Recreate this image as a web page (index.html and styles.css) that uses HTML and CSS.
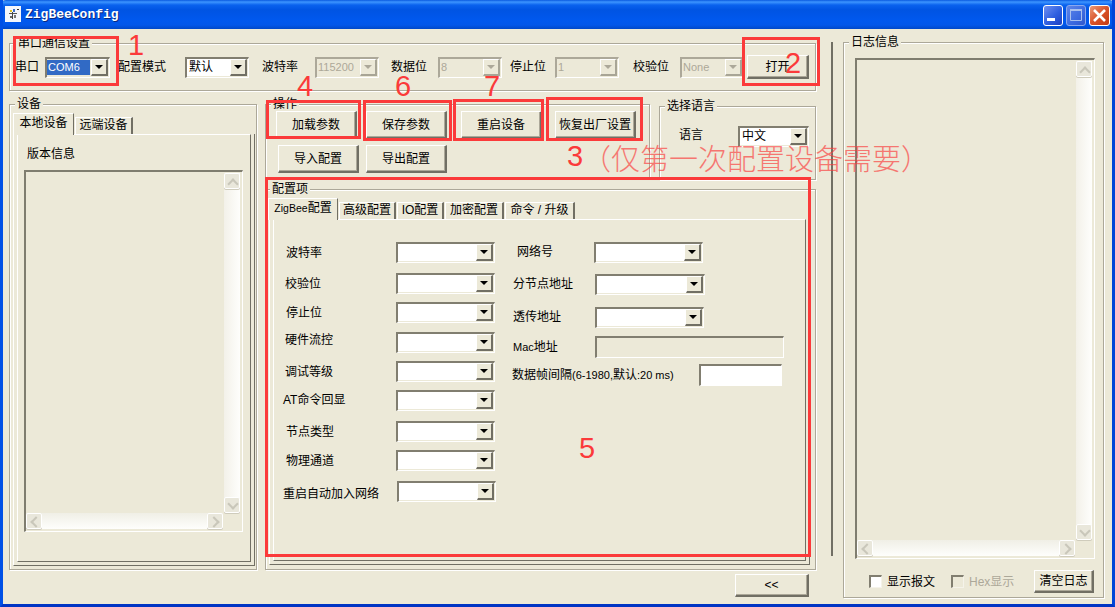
FILE: index.html
```html
<!DOCTYPE html>
<html lang="zh">
<head>
<meta charset="utf-8">
<title>ZigBeeConfig</title>
<link rel="stylesheet" href="styles.css">
</head>
<body>
<div class="window">
  <header class="titlebar">
    <svg class="app-icon" width="16" height="16" viewBox="0 0 16 16">
      <rect width="16" height="16" fill="#f4f6fb"/>
      <rect x="5" y="4" width="2" height="2" fill="#e0c020"/>
      <rect x="8" y="3" width="2" height="3" fill="#3a70d0"/>
      <rect x="4" y="7" width="8" height="1" fill="#555"/>
      <rect x="7" y="6" width="1" height="7" fill="#444"/>
      <rect x="5" y="10" width="2" height="2" fill="#666"/>
      <rect x="9" y="9" width="2" height="3" fill="#777"/>
      <rect x="12" y="3" width="2" height="1" fill="#333"/>
    </svg>
    <span class="title-text">ZigBeeConfig</span>
    <div class="win-btns">
      <div class="win-btn win-min"><svg width="20" height="21" viewBox="0 0 20 21"><rect x="4" y="13" width="8" height="3" fill="#fff"/></svg></div>
      <div class="win-btn win-max"><svg width="20" height="21" viewBox="0 0 20 21"><path d="M4.500 4.500h11v11h-11z" fill="none" stroke="#a9c0ee"/><rect x="4" y="4" width="12" height="2" fill="#a9c0ee"/></svg></div>
      <div class="win-btn win-close"><svg width="21" height="21" viewBox="0 0 21 21"><path d="M5 5l11 11M16 5L5 16" stroke="#fff" stroke-width="2.600" fill="none"/></svg></div>
    </div>
  </header>

  <div class="client">
    <div class="main">
      <section class="group serial">
        <span class="legend">串口通信设置</span>
        <div class="serial-row">
          <span>串口</span>
          <div class="combo c65"><div class="field selected">COM6</div><div class="arrow"></div></div>
          <span>配置模式</span>
          <div class="combo c64"><div class="field cn">默认</div><div class="arrow"></div></div>
          <span>波特率</span>
          <div class="combo c64 disabled"><div class="field">115200</div><div class="arrow"></div></div>
          <span>数据位</span>
          <div class="combo c64 disabled"><div class="field">8</div><div class="arrow"></div></div>
          <span>停止位</span>
          <div class="combo c64 disabled"><div class="field">1</div><div class="arrow"></div></div>
          <span>校验位</span>
          <div class="combo c64 disabled"><div class="field">None</div><div class="arrow"></div></div>
          <button class="btn open">打开</button>
        </div>
      </section>

      <div class="lower">
        <section class="group device">
          <span class="legend">设备</span>
          <div class="tabstrip">
            <div class="tab active t61">本地设备</div>
            <div class="tab t58">远端设备</div>
          </div>
          <div class="tabbody">
            <div class="page device-page">
              <div class="ver-label">版本信息</div>
              <div class="textarea ver-area">
                <div class="text-empty"></div>
                <div class="vscroll"><div class="sb up"></div><div class="sb down"></div></div>
                <div class="hscroll"><div class="sb left"></div><div class="sb right"></div></div>
              </div>
            </div>
          </div>
        </section>

        <div class="right-col">
          <div class="top-row">
            <section class="group ops">
              <span class="legend">操作</span>
              <div class="ops-row1">
                <button class="btn b81">加载参数</button>
                <button class="btn b81">保存参数</button>
                <button class="btn b81">重启设备</button>
                <button class="btn b81">恢复出厂设置</button>
              </div>
              <div class="ops-row2">
                <button class="btn b81">导入配置</button>
                <button class="btn b81">导出配置</button>
              </div>
            </section>
            <section class="group lang">
              <span class="legend">选择语言</span>
              <div class="lang-row">
                <span class="lang-label">语言</span>
                <div class="combo c71"><div class="field cn">中文</div><div class="arrow"></div></div>
              </div>
            </section>
          </div>

          <section class="group config">
            <span class="legend">配置项</span>
            <div class="tabstrip cfg-strip">
              <div class="tab active t70"><span class="lat-s">ZigBee</span>配置</div>
              <div class="tab t57">高级配置</div>
              <div class="tab t47">IO配置</div>
              <div class="tab t59">加密配置</div>
              <div class="tab t70b">命令 / 升级</div>
            </div>
            <div class="tabbody">
              <div class="page cfg-page">
                <div class="form-left">
                  <div class="frow"><span class="lb in3">波特率</span><div class="combo c99"><div class="field"></div><div class="arrow"></div></div></div>
                  <div class="frow"><span class="lb in2">校验位</span><div class="combo c99"><div class="field"></div><div class="arrow"></div></div></div>
                  <div class="frow"><span class="lb in3">停止位</span><div class="combo c99"><div class="field"></div><div class="arrow"></div></div></div>
                  <div class="frow"><span class="lb in2 up3">硬件流控</span><div class="combo c99"><div class="field"></div><div class="arrow"></div></div></div>
                  <div class="frow"><span class="lb in2">调试等级</span><div class="combo c99"><div class="field"></div><div class="arrow"></div></div></div>
                  <div class="frow"><span class="lb up1">AT命令回显</span><div class="combo c99"><div class="field"></div><div class="arrow"></div></div></div>
                  <div class="frow"><span class="lb in3">节点类型</span><div class="combo c99"><div class="field"></div><div class="arrow"></div></div></div>
                  <div class="frow"><span class="lb in3">物理通道</span><div class="combo c99"><div class="field"></div><div class="arrow"></div></div></div>
                  <div class="frow"><span class="lb dn2">重启自动加入网络</span><div class="combo c99 nudge"><div class="field"></div><div class="arrow"></div></div></div>
                </div>
                <div class="form-right">
                  <div class="rrow"><span class="rb in5">网络号</span><div class="combo c109 back1"><div class="field"></div><div class="arrow"></div></div></div>
                  <div class="rrow"><span class="rb in1">分节点地址</span><div class="combo c110"><div class="field"></div><div class="arrow"></div></div></div>
                  <div class="rrow"><span class="rb in1">透传地址</span><div class="combo c109"><div class="field"></div><div class="arrow"></div></div></div>
                  <div class="rrow"><span class="rb in1"><span class="lat">Mac</span>地址</span><div class="input in-mac"></div></div>
                  <div class="rrow"><span class="rb long">数据帧间隔<span class="lat">(6-1980,</span>默认<span class="lat">:20 ms)</span></span><div class="input in-gap"></div></div>
                </div>
              </div>
            </div>
          </section>
        </div>
      </div>

      <div class="main-foot"><button class="btn collapse">&lt;&lt;</button></div>
    </div>

    <div class="splitter"></div>

    <section class="group log">
      <span class="legend">日志信息</span>
      <div class="textarea log-area">
        <div class="text-empty"></div>
        <div class="vscroll"><div class="sb up"></div><div class="sb down"></div></div>
        <div class="hscroll"><div class="sb left"></div><div class="sb right"></div></div>
      </div>
      <div class="log-foot">
        <span class="check"></span><span class="check-label">显示报文</span>
        <span class="check off"></span><span class="check-label muted">Hex显示</span>
        <button class="btn clear">清空日志</button>
      </div>
    </section>
  </div>

  <div class="mark box1"></div>
  <div class="mark box2"></div>
  <div class="mark box3"></div>
  <div class="mark box4"></div>
  <div class="mark box5"></div>
  <div class="mark box6"></div>
  <div class="mark box7"></div>
  <span class="num n1">1</span>
  <span class="num n2">2</span>
  <span class="num n3">3</span>
  <span class="num n4">4</span>
  <span class="num n5">5</span>
  <span class="num n6">6</span>
  <span class="num n7">7</span>
  <span class="note">（仅第一次配置设备需要）</span>
</div>
</body>
</html>
```

FILE: styles.css
```css
* { box-sizing: border-box; }
html, body { margin: 0; padding: 0; }
body {
  width: 1115px;
  height: 607px;
  overflow: hidden;
  background: #ece9d8;
  font: 12px/14px "Liberation Sans", "Noto Sans CJK SC", sans-serif;
  color: #000;
}
.window {
  position: relative;
  width: 1115px;
  height: 607px;
  display: flex;
  flex-direction: column;
  background: #ece9d8;
  border-style: solid;
  border-width: 0 3px 3px 3px;
  border-color: #0050e0 #0046d8 #0035c4 #0050e6;
  overflow: hidden;
}

/* title bar */
.titlebar {
  flex: none;
  height: 29px;
  margin: 0 -3px;
  padding: 6px 5px 0 5px;
  display: flex;
  align-items: flex-start;
  border-radius: 6px 6px 0 0;
  background: linear-gradient(180deg, #0a5ae0 0, #3d95ff 2px, #0a62ee 5px, #0054e3 10px, #0058ee 20px, #0257ea 25px, #0048c8 29px);
}
.app-icon { flex: none; }
.title-text {
  margin: 2px 0 0 4px;
  font: bold 13px/14px "Liberation Mono", monospace;
  color: #fff;
  text-shadow: 1px 1px 0 #0a2a80;
}
.win-btns {
  margin-left: auto;
  display: flex;
  gap: 3px;
  margin-top: -1px;
}
.win-btn {
  width: 20px;
  height: 21px;
  border: 1px solid #fff;
  border-radius: 3px;
  overflow: hidden;
}
.win-btn svg { display: block; margin: -1px; }
.win-min { background: linear-gradient(135deg, #6f8ff0 0, #2f5fe0 55%, #1e3fc0 100%); }
.win-max { background: linear-gradient(135deg, #5f86e8 0, #3c6ae0 60%, #3058cc 100%); border-color: #8aa8ee; }
.win-close { width: 21px; background: linear-gradient(135deg, #ec9a78 0, #d9532a 50%, #c23a12 100%); }

/* layout */
.client {
  flex: 1;
  min-height: 0;
  display: flex;
  align-items: flex-start;
  padding-left: 6px;
}
.main { flex: none; width: 807px; padding-top: 14px; }
.lower { display: flex; gap: 8px; margin-top: 13px; height: 466px; }
.right-col { width: 551px; display: flex; flex-direction: column; }
.top-row { display: flex; align-items: flex-start; }
.main-foot { display: flex; justify-content: flex-end; padding: 4px 7px 0 0; }
.splitter { flex: none; width: 2px; height: 514px; margin: 13px 0 0 15px; background: #716f64; }

/* group boxes */
.group {
  position: relative;
  border: 1px solid #aca899;
  box-shadow: 1px 1px 0 #fff, inset 1px 1px 0 #fff;
}
.legend {
  position: absolute;
  left: 5px;
  top: -8px;
  padding: 0 2px;
  background: #ece9d8;
  white-space: nowrap;
}
.serial .legend { left: 6px; }
.config .legend { left: 4px; }
.serial { height: 48px; padding: 11px 0 0 5px; }
.serial-row {
  display: grid;
  grid-template-columns: 30px 73px 67px 77px 53px 76px 47px 72px 45px 78px 47px 67px 62px;
  align-items: center;
  height: 24px;
}
.device { width: 248px; padding: 8px 1px 3px 3px; display: flex; flex-direction: column; }
.ops { width: 385px; height: 75px; padding: 6px 0 0 10px; }
.ops-row1 { display: grid; grid-template-columns: 90px 95px 94px 82px; height: 28px; }
.ops-row2 { display: flex; gap: 7px; margin: 6px 0 0 2px; }
.lang { width: 157px; height: 74px; margin: 2px 0 0 9px; padding: 19px 0 0 19px; }
.lang-row { display: grid; grid-template-columns: 59px 71px; align-items: center; }
.lang-label { margin-bottom: 4px; }
.config { flex: 1; margin-top: 9px; padding: 8px 5px 4px 3px; display: flex; flex-direction: column; min-height: 0; }
.log { flex: none; width: 261px; height: 556px; margin: 13px 0 0 10px; padding: 15px 9px 0 11px; }

/* tabs */
.tabstrip { flex: none; display: flex; align-items: flex-end; height: 21px; position: relative; z-index: 1; }
.cfg-strip { margin-left: -1px; }
.tab {
  height: 17px;
  margin-left: 1px;
  text-align: center;
  line-height: 15px;
  border-style: solid;
  border-width: 1px 2px 0 1px;
  border-color: #fff #716f64 #fff #fff;
  white-space: nowrap;
}
.tab.active { height: 22px; margin: 0 0 -1px 0; line-height: 19px; background: #ece9d8; border-right-width: 1px; }
.t61 { width: 61px; }
.t58 { width: 58px; }
.t70 { width: 70px; }
.t57 { width: 57px; }
.t47 { width: 47px; }
.t59 { width: 59px; }
.t70b { width: 70px; }
.tabbody {
  flex: 1;
  min-height: 0;
  display: flex;
  padding: 0 3px 3px 3px;
  border-style: solid;
  border-width: 0 1px 1px 1px;
  border-color: #716f64 #716f64 #716f64 #fff;
}
.page {
  flex: 1;
  min-width: 0;
  border-style: solid;
  border-width: 1px;
  border-color: #fff #716f64 #716f64 #fff;
}
.device-page { padding: 12px 0 0 6px; }
.ver-label { padding-left: 3px; height: 14px; }

/* sunken text area with disabled scrollbars */
.textarea {
  display: grid;
  grid-template-columns: 1fr 17px;
  grid-template-rows: 1fr 16px;
  border-style: solid;
  border-width: 2px 1px 1px 2px;
  border-color: #7f7d6f #fff #fff #7f7d6f;
  padding: 1px 2px 2px 0;
}
.ver-area { width: 219px; height: 362px; margin-top: 9px; }
.log-area { width: 240px; height: 501px; }
.vscroll {
  display: flex;
  flex-direction: column;
  justify-content: space-between;
  margin-left: 1px;
  background: linear-gradient(90deg, #f3f1e9, #fefefc);
}
.hscroll {
  display: flex;
  justify-content: space-between;
  grid-column: 1;
  grid-row: 2;
  background: linear-gradient(180deg, #f0efe6, #fefefc);
}
.vscroll { grid-column: 2; grid-row: 1; }
.text-empty { grid-column: 1; grid-row: 1; }
.sb {
  position: relative;
  width: 16px;
  height: 16px;
  flex: none;
  border: 1px solid #fff;
  border-radius: 2px;
  background: #e9e7db;
  box-shadow: 0 1px 0 #cfccbc;
}
.sb::before {
  content: "";
  position: absolute;
  width: 6px;
  height: 6px;
  left: 4px;
  top: 5px;
  border-style: solid;
  border-color: #c9c7ba;
  border-width: 2px 0 0 2px;
}
.sb.up::before { transform: rotate(45deg); top: 6px; }
.sb.down::before { transform: rotate(225deg); top: 2px; }
.sb.left::before { transform: rotate(-45deg); left: 5px; top: 4px; }
.sb.right::before { transform: rotate(135deg); left: 2px; top: 4px; }

/* controls */
.combo {
  display: flex;
  height: 21px;
  padding: 0 1px 1px 0;
  background: #ece9d8;
  border-style: solid;
  border-width: 2px 1px 1px 2px;
  border-color: #817e70 #fff #fff #817e70;
}
.c64 { width: 64px; }
.c65 { width: 65px; }
.c71 { width: 71px; }
.c99 { width: 99px; }
.c109 { width: 109px; }
.c110 { width: 110px; }
.nudge { margin-left: 1px; }
.back1 { margin-left: -1px; }
.field {
  flex: 1;
  min-width: 0;
  padding-left: 1px;
  background: #fff;
  line-height: 17px;
  font-size: 11px;
  overflow: hidden;
  white-space: nowrap;
}
.field.cn { font-size: 12px; padding-left: 2px; }
.field.selected { margin: 1px 1px 1px 0; background: #316ac5; color: #fff; line-height: 15px; }
.arrow {
  position: relative;
  flex: none;
  width: 17px;
  background: #ece9d8;
  border-style: solid;
  border-width: 1px 2px 2px 1px;
  border-color: #fff #716f64 #716f64 #fff;
}
.arrow::after {
  content: "";
  position: absolute;
  left: 3px;
  top: 5px;
  border-style: solid;
  border-width: 4px 4px 0 4px;
  border-color: #000 transparent transparent transparent;
}
.disabled { border-color: #aca899 #fff #fff #aca899; }
.disabled .field { background: #ece9d8; color: #aca899; }
.disabled .arrow { border-color: #fff #a8a596 #a8a596 #fff; }
.disabled .arrow::after { border-top-color: #aca899; }

.btn {
  display: block;
  padding: 0;
  font: inherit;
  color: #000;
  background: #ece9d8;
  border-style: solid;
  border-width: 1px 2px 2px 1px;
  border-color: #fff #716f64 #716f64 #fff;
  box-shadow: inset -1px -1px 0 #aca899;
}
.b81 { width: 81px; height: 28px; }
.open { width: 62px; height: 24px; }
.collapse { width: 74px; height: 23px; }
.clear { width: 60px; height: 23px; margin-left: auto; }

.input {
  height: 22px;
  border-style: solid;
  border-width: 2px 1px 1px 2px;
  border-color: #817e70 #fff #fff #817e70;
}
.in-mac { width: 189px; }
.in-gap { width: 83px; background: #fff; }
.lat { font-size: 11px; }
.lat-s { font-size: 10.500px; }

/* config form */
.cfg-page { display: flex; padding: 22px 0 0 9px; }
.form-left {
  flex: none;
  width: 229px;
  display: grid;
  grid-template-rows: 31px 29px 30px 29px 29px 31px 29px 31px 21px;
}
.frow { display: flex; align-items: center; height: 21px; }
.lb { flex: none; width: 113px; white-space: nowrap; }
.in1 { padding-left: 1px; }
.in2 { padding-left: 2px; }
.in3 { padding-left: 3px; }
.in5 { padding-left: 5px; }
.up1 { margin-bottom: 2px; }
.up3 { margin-bottom: 6px; }
.dn2 { margin-top: 4px; }
.form-right {
  flex: none;
  width: 275px;
  margin-top: -1px;
  display: grid;
  grid-template-rows: 32px 33px 30px 28px 22px;
}
.rrow { display: flex; align-items: center; height: 22px; }
.rb { flex: none; width: 83px; white-space: nowrap; }
.rb.long { width: 187px; }

/* log footer */
.log-foot { display: flex; align-items: center; height: 23px; margin-top: 11px; padding-left: 14px; }
.check {
  flex: none;
  width: 13px;
  height: 13px;
  background: #fff;
  border-style: solid;
  border-width: 2px 1px 1px 2px;
  border-color: #817e70 #f5f3ea #f5f3ea #817e70;
}
.check.off { background: #ece9d8; margin-left: 16px; }
.check-label { margin-left: 5px; white-space: nowrap; }
.muted { color: #aca899; }

/* red annotations over the screenshot */
.mark { position: absolute; border: 3px solid #fb3a3a; pointer-events: none; }
.box1 { left: 10px; top: 36px; width: 106px; height: 50px; }
.box2 { left: 739px; top: 37px; width: 78px; height: 49px; }
.box3 { left: 543px; top: 97px; width: 97px; height: 44px; }
.box4 { left: 263px; top: 100px; width: 95px; height: 39px; }
.box5 { left: 262px; top: 177px; width: 546px; height: 380px; }
.box6 { left: 360px; top: 100px; width: 89px; height: 41px; }
.box7 { left: 450px; top: 99px; width: 91px; height: 42px; }
.num {
  position: absolute;
  font: 29px/30px "Liberation Sans", sans-serif;
  color: #fb3a3a;
}
.n1 { left: 125px; top: 30px; }
.n2 { left: 782px; top: 48px; }
.n3 { left: 564px; top: 141px; }
.n4 { left: 294px; top: 71px; }
.n5 { left: 576px; top: 433px; }
.n6 { left: 392px; top: 71px; }
.n7 { left: 481px; top: 71px; }
.note {
  position: absolute;
  left: 579px;
  top: 142px;
  font: 300 29px/30px "Noto Sans CJK SC", sans-serif;
  color: #fb3a3a;
  opacity: .65;
  white-space: nowrap;
}
```
